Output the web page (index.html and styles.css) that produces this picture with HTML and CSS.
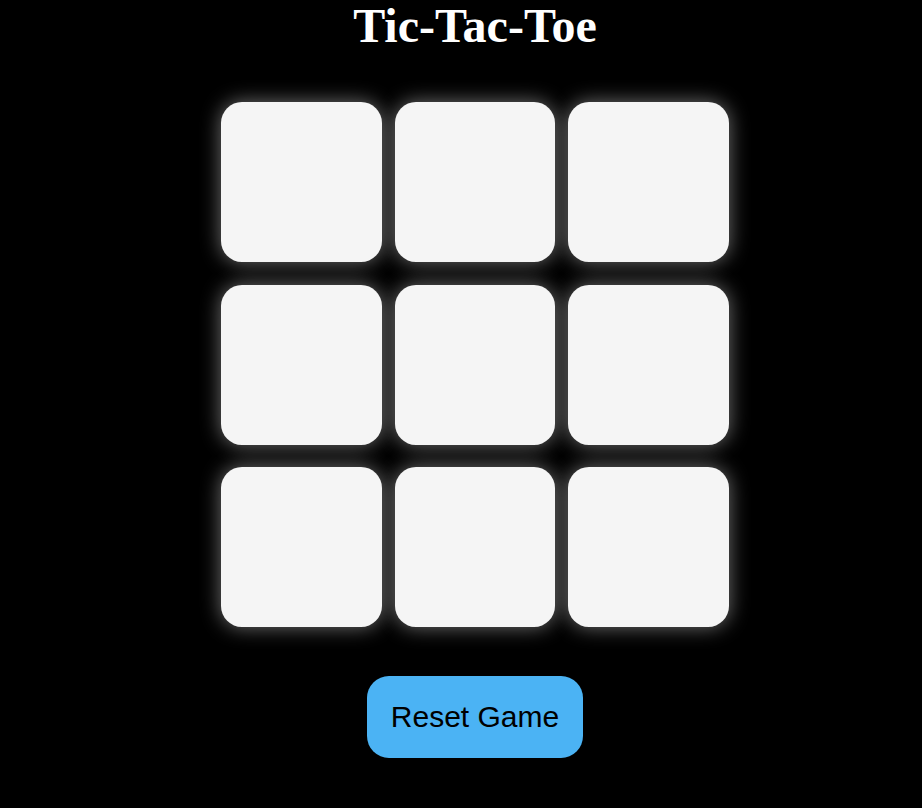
FILE: index.html
```html
<!DOCTYPE html>
<html lang="en">
<head>
<meta charset="utf-8">
<title>Tic-Tac-Toe</title>
<link rel="stylesheet" href="styles.css">
</head>
<body>
<main class="page">
  <h1 class="title">Tic-Tac-Toe</h1>
  <div class="board">
    <div class="cell"></div>
    <div class="cell"></div>
    <div class="cell"></div>
    <div class="cell"></div>
    <div class="cell"></div>
    <div class="cell"></div>
    <div class="cell"></div>
    <div class="cell"></div>
    <div class="cell"></div>
  </div>
  <button class="reset" type="button">Reset Game</button>
</main>
</body>
</html>
```
FILE: styles.css
```css
html, body {
  margin: 0;
  padding: 0;
  background: #000;
}
.page {
  padding-left: 28px;
  display: flex;
  flex-direction: column;
  align-items: center;
}
.title {
  margin: 0;
  font-family: "Liberation Serif", "Times New Roman", serif;
  font-weight: bold;
  font-size: 48px;
  line-height: 52px;
  color: #fff;
}
.board {
  margin-top: 50px;
  display: grid;
  grid-template-columns: repeat(3, 160.67px);
  grid-auto-rows: 160px;
  column-gap: 13px;
  row-gap: 22.5px;
}
.cell {
  background: #f5f5f5;
  border-radius: 21px;
  box-shadow: 0 0 20px rgba(255, 255, 255, 0.45);
}
.reset {
  margin-top: 49px;
  width: 216px;
  height: 82px;
  border: none;
  border-radius: 22px;
  background: #4bb3f4;
  color: #000;
  font-family: "Liberation Sans", Arial, sans-serif;
  font-size: 30px;
  padding: 0;
  cursor: pointer;
}
```
